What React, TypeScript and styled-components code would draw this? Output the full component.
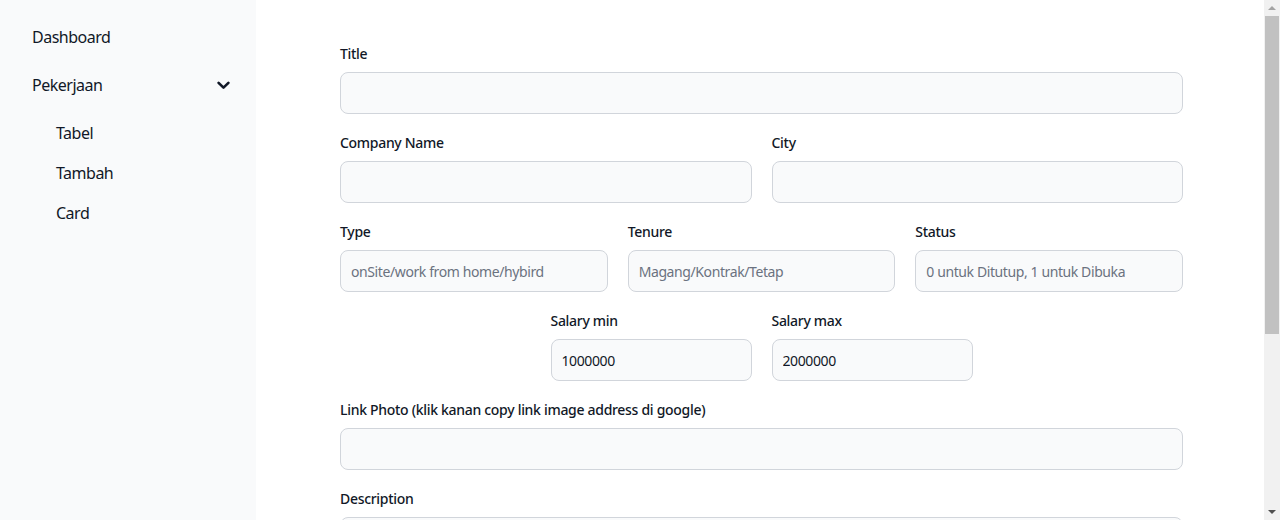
import React from "react";
import styled, { createGlobalStyle } from "styled-components";

const Global = createGlobalStyle`
  html, body { margin: 0; padding: 0; }
  body {
    font-family: "Noto Sans", "Open Sans", sans-serif;
    color: #111827;
    background: #ffffff;
    overflow: hidden;
  }
  * { box-sizing: border-box; }
`;

const Layout = styled.div`
  display: flex;
  height: 100vh;
  overflow: hidden;
`;

const Sidebar = styled.aside`
  width: 256px;
  flex-shrink: 0;
  background: #f9fafb;
  padding: 13px 24px 0 24px;
`;

const NavList = styled.ul`
  list-style: none;
  margin: 0;
  padding: 0;
  display: flex;
  flex-direction: column;
`;

const SubList = styled.ul`
  list-style: none;
  margin: 4px 0 0 0;
  padding: 0;
  display: flex;
  flex-direction: column;
`;

const NavItem = styled.li<{ $sub?: boolean }>`
  display: flex;
  align-items: center;
  justify-content: space-between;
  height: ${(p) => (p.$sub ? "40px" : "48px")};
  padding-left: ${(p) => (p.$sub ? "32px" : "8px")};
  padding-right: 2px;
  font-size: 16px;
  letter-spacing: -0.5px;
  color: #111827;
`;

const Chevron = styled.svg`
  width: 13px;
  height: 9px;
`;

const Main = styled.main`
  flex: 1;
  overflow: hidden;
  padding: 44px 0 0 84px;
`;

const Form = styled.form`
  width: 843px;
  display: flex;
  flex-direction: column;
  gap: 19px;
`;

const Row = styled.div<{ $cols: number }>`
  display: grid;
  grid-template-columns: repeat(${(p) => p.$cols}, 1fr);
  column-gap: 20px;
`;

const CenterRow = styled.div`
  display: flex;
  justify-content: center;
  gap: 20px;
`;

const Field = styled.div<{ $w?: number }>`
  display: flex;
  flex-direction: column;
  ${(p) => (p.$w ? `width: ${p.$w}px;` : "")}
`;

const Label = styled.label`
  display: block;
  font-size: 14px;
  line-height: 20px;
  font-weight: 500;
  letter-spacing: -0.3px;
  color: #111827;
  margin-bottom: 8px;
`;

const Input = styled.input`
  width: 100%;
  height: 42px;
  background: #f9fafb;
  border: 1px solid #d1d5db;
  border-radius: 8px;
  padding: 0 10px;
  font-family: inherit;
  font-size: 14px;
  letter-spacing: -0.4px;
  color: #111827;
  outline: none;
  &::placeholder { color: #6b7280; }
`;

const TextArea = styled.textarea`
  width: 100%;
  height: 98px;
  background: #f9fafb;
  border: 1px solid #d1d5db;
  border-radius: 8px;
  padding: 10px;
  font-family: inherit;
  font-size: 14px;
  resize: none;
  outline: none;
`;

const ScrollTrack = styled.div`
  width: 16px;
  flex-shrink: 0;
  background: #f1f1f1;
  display: flex;
  flex-direction: column;
  align-items: center;
`;

const ScrollArrow = styled.div`
  height: 16px;
  width: 16px;
  display: flex;
  align-items: center;
  justify-content: center;
`;

const ScrollThumb = styled.div`
  width: 14px;
  height: 318px;
  background: #c1c1c1;
`;

const Spacer = styled.div`
  flex: 1;
`;

export default function App() {
  return (
    <>
      <Global />
      <Layout>
        <Sidebar>
          <NavList>
            <NavItem>Dashboard</NavItem>
            <NavItem>
              Pekerjaan
              <Chevron viewBox="0 0 13 9" fill="none" stroke="#111827" strokeWidth="2.6" strokeLinecap="round" strokeLinejoin="round">
                <path d="M1.6 1.8l4.9 4.9 4.9-4.9" />
              </Chevron>
            </NavItem>
          </NavList>
          <SubList>
            <NavItem $sub>Tabel</NavItem>
            <NavItem $sub>Tambah</NavItem>
            <NavItem $sub>Card</NavItem>
          </SubList>
        </Sidebar>
        <Main>
          <Form>
            <Field>
              <Label>Title</Label>
              <Input />
            </Field>
            <Row $cols={2}>
              <Field>
                <Label>Company Name</Label>
                <Input />
              </Field>
              <Field>
                <Label>City</Label>
                <Input />
              </Field>
            </Row>
            <Row $cols={3}>
              <Field>
                <Label>Type</Label>
                <Input placeholder="onSite/work from home/hybird" />
              </Field>
              <Field>
                <Label>Tenure</Label>
                <Input placeholder="Magang/Kontrak/Tetap" />
              </Field>
              <Field>
                <Label>Status</Label>
                <Input placeholder="0 untuk Ditutup, 1 untuk Dibuka" />
              </Field>
            </Row>
            <CenterRow>
              <Field $w={201}>
                <Label>Salary min</Label>
                <Input defaultValue="1000000" />
              </Field>
              <Field $w={201}>
                <Label>Salary max</Label>
                <Input defaultValue="2000000" />
              </Field>
            </CenterRow>
            <Field>
              <Label>Link Photo (klik kanan copy link image address di google)</Label>
              <Input />
            </Field>
            <Field>
              <Label>Description</Label>
              <TextArea />
            </Field>
          </Form>
        </Main>
        <ScrollTrack>
          <ScrollArrow>
            <svg width="8" height="4" viewBox="0 0 8 4"><path d="M0 4L4 0L8 4Z" fill="#a3a3a3" /></svg>
          </ScrollArrow>
          <ScrollThumb />
          <Spacer />
          <ScrollArrow>
            <svg width="8" height="4" viewBox="0 0 8 4"><path d="M0 0L8 0L4 4Z" fill="#505050" /></svg>
          </ScrollArrow>
        </ScrollTrack>
      </Layout>
    </>
  );
}
